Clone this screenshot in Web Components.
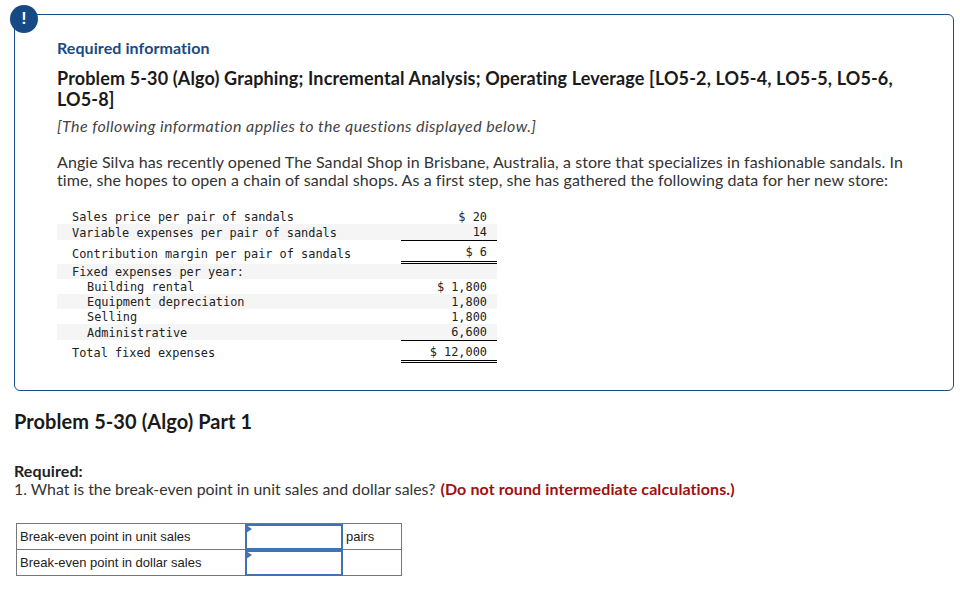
<!DOCTYPE html>
<html>
<head>
<meta charset="utf-8">
<style>
  html, body { margin: 0; background: #fff; }
  body { font-family: Lato, "Open Sans", sans-serif; color: #1a1a1a; width: 960px; height: 590px; overflow: hidden; }
</style>
</head>
<body>
<info-card>
  <h-line slot="label" kind="label">Required information</h-line>
  <h-line slot="title" kind="title">Problem 5-30 (Algo) Graphing; Incremental Analysis; Operating Leverage [LO5-2, LO5-4, LO5-5, LO5-6, LO5-8]</h-line>
  <h-line slot="note" kind="note">[The following information applies to the questions displayed below.]</h-line>
  <h-line slot="body" kind="body">Angie Silva has recently opened The Sandal Shop in Brisbane, Australia, a store that specializes in fashionable sandals. In time, she hopes to open a chain of sandal shops. As a first step, she has gathered the following data for her new store:</h-line>
  <data-table slot="table">
    <data-row h="16" pad="2" vpad="2" label="Sales price per pair of sandals" value="$ 20"></data-row>
    <data-row h="16" pad="2" shade line="single" label="Variable expenses per pair of sandals" value="14"></data-row>
    <data-row h="24" pad="4" vpad="4" line="double" label="Contribution margin per pair of sandals" value="$ 6"></data-row>
    <data-row h="15" pad="1" shade label="Fixed expenses per year:"></data-row>
    <data-row h="15" pad="1" vpad="1" indent label="Building rental" value="$ 1,800"></data-row>
    <data-row h="15" pad="1" vpad="1" shade indent label="Equipment depreciation" value="1,800"></data-row>
    <data-row h="15" pad="1" vpad="1" indent label="Selling" value="1,800"></data-row>
    <data-row h="16" pad="1" vpad="1" shade indent line="single" label="Administrative" value="6,600"></data-row>
    <data-row h="23" pad="4" vpad="4" line="double" label="Total fixed expenses" value="$ 12,000"></data-row>
  </data-table>
</info-card>
<part-section>
  <span slot="heading">Problem 5-30 (Algo) Part 1</span>
  <span slot="req">Required:</span>
  <span slot="question">1. What is the break-even point in unit sales and dollar sales?</span>
  <span slot="hint">(Do not round intermediate calculations.)</span>
  <answer-table slot="answers">
    <answer-row label="Break-even point in unit sales" unit="pairs"></answer-row>
    <answer-row label="Break-even point in dollar sales"></answer-row>
  </answer-table>
</part-section>

<script>
class HLine extends HTMLElement {
  constructor() {
    super();
    this.attachShadow({mode: 'open'}).innerHTML = `
      <style>
        :host { display: block; }
        :host([kind=label]) { font-size: 16px; letter-spacing: .08px; font-weight: 700; color: #1b4a82; line-height: 18px; }
        :host([kind=title]) { font-size: 18px; letter-spacing: .14px; font-weight: 700; color: #1a1a1a; line-height: 21px; margin-top: 11px; }
        :host([kind=note]) { font-size: 16px; letter-spacing: .4px; font-style: italic; color: #444; line-height: 18px; margin-top: 7px; }
        :host([kind=body]) { font-size: 16px; letter-spacing: .08px; color: #333; line-height: 18px; margin-top: 18px; }
      </style>
      <slot></slot>`;
  }
}
customElements.define('h-line', HLine);

class InfoCard extends HTMLElement {
  constructor() {
    super();
    this.attachShadow({mode: 'open'}).innerHTML = `
      <style>
        :host { display: block; position: relative; box-sizing: border-box; margin: 14px 6px 0 14px; height: 377px;
                border: 1px solid #1b4f8a; border-radius: 6px; padding: 24px 42px 0 42px; }
        .badge { position: absolute; left: -5px; top: -10px; width: 28px; height: 28px; border-radius: 50%;
                 background: #174a85; color: #fff; font: 700 16px/28px "Liberation Sans", sans-serif; text-align: center; }
        ::slotted(data-table) { margin: 19px 0 0 0; }
      </style>
      <div class="badge">!</div>
      <slot name="label"></slot>
      <slot name="title"></slot>
      <slot name="note"></slot>
      <slot name="body"></slot>
      <slot name="table"></slot>`;
  }
}
customElements.define('info-card', InfoCard);

class DataTable extends HTMLElement {
  constructor() {
    super();
    this.attachShadow({mode: 'open'}).innerHTML = `
      <style>:host { display: block; width: 440px; }</style>
      <slot></slot>`;
  }
}
customElements.define('data-table', DataTable);

class DataRow extends HTMLElement {
  constructor() {
    super();
    this.attachShadow({mode: 'open'});
  }
  connectedCallback() {
    const h = this.getAttribute('h');
    const pad = this.getAttribute('pad') || 0;
    const vpad = this.getAttribute('vpad') || 0;
    const line = this.getAttribute('line');
    const border = line === 'double' ? 'border-bottom: 3px double #000;' : line === 'single' ? 'border-bottom: 1px solid #000;' : '';
    this.shadowRoot.innerHTML = `
      <style>
        :host { display: grid; grid-template-columns: 344px 96px; height: ${h}px; box-sizing: border-box;
                font: 11.9px/15px "DejaVu Sans Mono", monospace; color: #222; }
        :host([shade]) { background: #f5f5f5; }
        .l { padding: ${pad}px 0 0 15px; white-space: pre; align-self: center; }
        :host([indent]) .l { padding-left: 30px; }
        .v { box-sizing: border-box; padding: ${vpad}px 10px 0 0; text-align: right; white-space: pre; display: flex; align-items: center; justify-content: flex-end; ${border} }
      </style>
      <div class="l">${this.getAttribute('label')}</div>
      <div class="v">${this.getAttribute('value') || ''}</div>`;
  }
}
customElements.define('data-row', DataRow);

class PartSection extends HTMLElement {
  constructor() {
    super();
    this.attachShadow({mode: 'open'}).innerHTML = `
      <style>
        :host { display: block; padding: 19px 14px 0 14px; }
        .heading { font-size: 20px; letter-spacing: .08px; font-weight: 700; line-height: 23px; color: #1a1a1a; }
        .req { margin-top: 29px; font-size: 16px; letter-spacing: .1px; font-weight: 700; line-height: 18px; color: #222; }
        .q { font-size: 15.85px; line-height: 18px; color: #333; }
        .hint { font-size: 16px; letter-spacing: .1px; margin-left: 1px; font-weight: 700; color: #a01010; }
        ::slotted(answer-table) { margin: 25px 0 0 2px; }
      </style>
      <div class="heading"><slot name="heading"></slot></div>
      <div class="req"><slot name="req"></slot></div>
      <div class="q"><slot name="question"></slot> <span class="hint"><slot name="hint"></slot></span></div>
      <slot name="answers"></slot>`;
  }
}
customElements.define('part-section', PartSection);

class AnswerTable extends HTMLElement {
  constructor() {
    super();
    this.attachShadow({mode: 'open'}).innerHTML = `
      <style>:host { display: block; width: 386px; box-sizing: border-box; border: 1px solid #777; border-bottom: 0; }</style>
      <slot></slot>`;
  }
}
customElements.define('answer-table', AnswerTable);

class AnswerRow extends HTMLElement {
  constructor() {
    super();
    this.attachShadow({mode: 'open'});
  }
  connectedCallback() {
    this.shadowRoot.innerHTML = `
      <style>
        :host { display: grid; grid-template-columns: 229px 96px 59px; height: 26px; box-sizing: border-box;
                border-bottom: 1px solid #777; font: 13px/25px "Liberation Sans", Arial, sans-serif; color: #222; }
        .l { padding-left: 3px; white-space: nowrap; }
        .inp { position: relative; box-sizing: border-box; border: 2px solid #3f73b5; margin: 0 -1px -1px -1px; }
        .inp::before { content: ""; position: absolute; left: -1px; top: -1px; border-left: 6px solid #3f73b5;
                       border-top: 4px solid transparent; border-bottom: 4px solid transparent; }
        .u { padding-left: 4px; }
      </style>
      <div class="l">${this.getAttribute('label')}</div>
      <div class="inp"></div>
      <div class="u">${this.getAttribute('unit') || ''}</div>`;
  }
}
customElements.define('answer-row', AnswerRow);
</script>
</body>
</html>
